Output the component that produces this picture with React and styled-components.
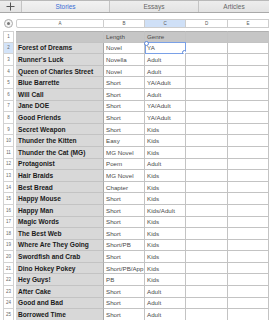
import React from "react";
import styled, { createGlobalStyle } from "styled-components";

const Global = createGlobalStyle`
  html, body { margin: 0; padding: 0; background: #fff; }
  body { font-family: "Liberation Sans", Arial, sans-serif; overflow: hidden; }
`;

const Page = styled.div`
  width: 269px;
  height: 320px;
  overflow: hidden;
  background: #fff;
`;

const TabBar = styled.div`
  display: flex;
  height: 13px;
  background: linear-gradient(#ededed, #e3e3e3);
  border-top: 1px solid #b9b9b9;
  border-bottom: 1px solid #a9a9a9;
  box-sizing: border-box;
`;

const AddTab = styled.div`
  width: 21px;
  display: flex;
  align-items: center;
  justify-content: center;
  border-right: 1px solid #c4c4c4;
  color: #555;
`;

const Tab = styled.div`
  width: ${(p) => p.$w}px;
  flex: ${(p) => (p.$grow ? 1 : "none")};
  display: flex;
  align-items: center;
  justify-content: center;
  font-size: 6.5px;
  color: ${(p) => (p.$active ? "#3d6fd6" : "#666")};
  border-right: ${(p) => (p.$last ? "none" : "1px solid #c4c4c4")};
  background: ${(p) => (p.$active ? "linear-gradient(#f2f2f2, #e8e8e8)" : "transparent")};
`;

const cols = "16px 88px 41px 41px 42px 1fr";

const HeaderRow = styled.div`
  display: grid;
  grid-template-columns: ${cols};
  height: 8px;
  margin-top: 6px;
  margin-bottom: 4px;
`;

const Corner = styled.div`
  display: flex;
  align-items: center;
  justify-content: center;
`;

const CornerDot = styled.div`
  width: 7px;
  height: 7px;
  border-radius: 50%;
  border: 1px solid #aaa;
  background: #f4f4f4;
  display: flex;
  align-items: center;
  justify-content: center;
  &::after {
    content: "";
    width: 3px;
    height: 3px;
    border-radius: 50%;
    background: #777;
  }
`;

const ColHead = styled.div`
  display: flex;
  align-items: center;
  justify-content: center;
  font-size: 4.5px;
  color: #555;
  border: 1px solid #cdcdcd;
  border-left: ${(p) => (p.$first ? "1px solid #cdcdcd" : "none")};
  border-radius: ${(p) => (p.$first ? "2px 0 0 2px" : "0")};
  background: ${(p) => (p.$sel ? "#cfe0f7" : "#fff")};
`;

const Row = styled.div`
  display: grid;
  grid-template-columns: ${cols};
  height: 11.6px;
`;

const RowNum = styled.div`
  margin: 0 2px 0 3px;
  display: flex;
  align-items: center;
  justify-content: center;
  font-size: 4.5px;
  color: #666;
  border: 1px solid #d2d2d2;
  border-top: ${(p) => (p.$first ? "1px solid #d2d2d2" : "none")};
  background: ${(p) => (p.$sel ? "#d3e3f8" : "#fff")};
`;

const Cell = styled.div`
  position: relative;
  display: flex;
  align-items: center;
  padding-left: 2px;
  overflow: hidden;
  white-space: nowrap;
  font-size: ${(p) => (p.$bold ? "6.6px" : "6.2px")};
  font-weight: ${(p) => (p.$bold ? 700 : 400)};
  color: ${(p) => (p.$bold ? "#1a1a1a" : "#4a4a4a")};
  background: ${(p) => (p.$head ? "#c6c6c6" : p.$bold ? "#d8d8d8" : "#fff")};
  border-bottom: 1px solid #c3c3c3;
  border-right: 1px solid ${(p) => (p.$bold ? "#a8a8a8" : "#c3c3c3")};
  border-top: ${(p) => (p.$first ? "1px solid #b0b0b0" : "none")};
  box-sizing: border-box;
`;

const Selection = styled.div`
  position: absolute;
  left: 0;
  top: -1px;
  right: -1px;
  bottom: -1px;
  border: 1px solid #7aa0e6;
  pointer-events: none;
`;

const Handle = styled.div`
  position: absolute;
  width: 3px;
  height: 3px;
  border-radius: 50%;
  border: 1px solid #5b86d8;
  background: #fff;
  ${(p) => (p.$tl ? "left: -2px; top: -2px;" : "right: -2px; bottom: -2px;")}
`;

const SelCell = styled(Cell)`
  overflow: visible;
`;

const data = [
  ["Forest of Dreams", "Novel", "YA"],
  ["Runner's Luck", "Novella", "Adult"],
  ["Queen of Charles Street", "Novel", "Adult"],
  ["Blue Barrette", "Short", "YA/Adult"],
  ["Will Call", "Short", "Adult"],
  ["Jane DOE", "Short", "YA/Adult"],
  ["Good Friends", "Short", "YA/Adult"],
  ["Secret Weapon", "Short", "Kids"],
  ["Thunder the Kitten", "Easy", "Kids"],
  ["Thunder the Cat (MG)", "MG Novel", "Kids"],
  ["Protagonist", "Poem", "Adult"],
  ["Hair Braids", "MG Novel", "Kids"],
  ["Best Bread", "Chapter", "Kids"],
  ["Happy Mouse", "Short", "Kids"],
  ["Happy Man", "Short", "Kids/Adult"],
  ["Magic Words", "Short", "Kids"],
  ["The Best Web", "Short", "Kids"],
  ["Where Are They Going", "Short/PB", "Kids"],
  ["Swordfish and Crab", "Short", "Kids"],
  ["Dino Hokey Pokey", "Short/PB/App", "Kids"],
  ["Hey Guys!", "PB", "Kids"],
  ["After Cake", "Short", "Adult"],
  ["Good and Bad", "Short", "Adult"],
  ["Borrowed Time", "Short", "Adult"],
];

export default function App() {
  return (
    <Page>
      <Global />
      <TabBar>
        <AddTab>
          <svg width="9" height="9" viewBox="0 0 9 9">
            <path d="M4.5 0.5v8M0.5 4.5h8" stroke="#555" strokeWidth="1" />
          </svg>
        </AddTab>
        <Tab $w={87} $active>Stories</Tab>
        <Tab $w={88}>Essays</Tab>
        <Tab $grow $last>Articles</Tab>
      </TabBar>
      <HeaderRow>
        <Corner>
          <CornerDot />
        </Corner>
        <ColHead $first>A</ColHead>
        <ColHead>B</ColHead>
        <ColHead $sel>C</ColHead>
        <ColHead>D</ColHead>
        <ColHead>E</ColHead>
      </HeaderRow>
      <Row>
        <RowNum $first>1</RowNum>
        <Cell $head $first />
        <Cell $head $first>Length</Cell>
        <Cell $head $first>Genre</Cell>
        <Cell $head $first />
        <Cell $head $first />
      </Row>
      {data.map(([a, b, c], i) => {
        const n = i + 2;
        const sel = n === 2;
        return (
          <Row key={n}>
            <RowNum $sel={sel}>{n}</RowNum>
            <Cell $bold>{a}</Cell>
            <Cell>{b}</Cell>
            {sel ? (
              <SelCell>
                {c}
                <Selection>
                  <Handle $tl />
                  <Handle />
                </Selection>
              </SelCell>
            ) : (
              <Cell>{c}</Cell>
            )}
            <Cell />
            <Cell />
          </Row>
        );
      })}
    </Page>
  );
}
